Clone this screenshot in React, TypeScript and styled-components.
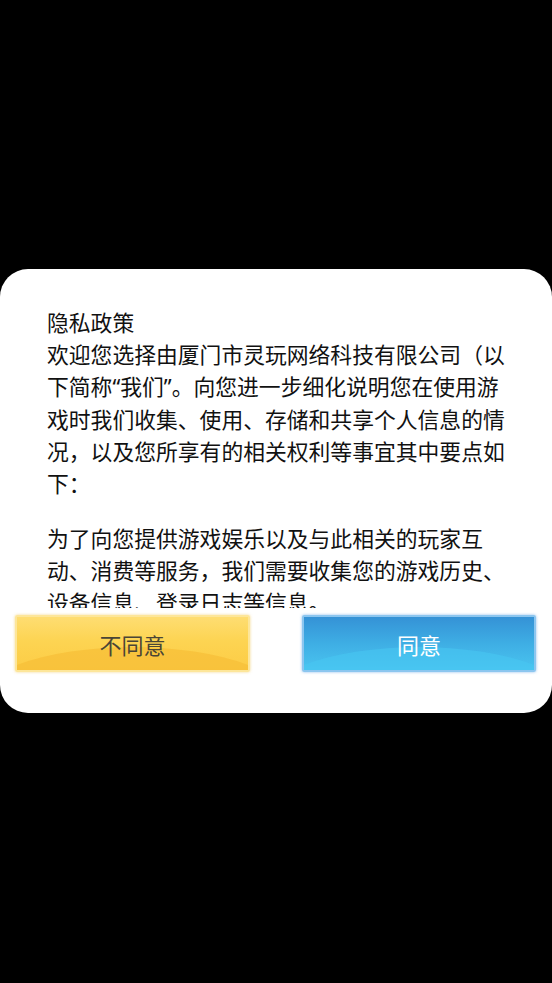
import styled, { createGlobalStyle } from 'styled-components';

const GlobalStyle = createGlobalStyle`
   html, body {
      margin: 0;
      padding: 0;
      background: #000;
   }

   body {
      font-family: "Noto Sans CJK SC", "Noto Sans", sans-serif;
   }
`

const Screen = styled.div`
   width: 552px;
   height: 983px;
   padding-top: 269px;
   box-sizing: border-box;
   background: #000;
`

const Dialog = styled.div`
   display: flex;
   flex-direction: column;
   height: 444px;
   border-radius: 28px;
   background: #fff;
   overflow: hidden;
`

const Content = styled.div`
   height: 302px;
   margin-top: 37px;
   padding-left: 47px;
   overflow: hidden;
   font-size: 21.8px;
   line-height: 32px;
   color: #111;
`

const Paragraph = styled.p<{ $gap?: number }>`
   margin: ${(p) => p.$gap ?? 0}px 0 0 0;
`

const Line = styled.span`
   display: block;
   white-space: nowrap;
`

// the reference renders curly quotes narrow, not full width
const Quote = styled.span`
   font-family: "Noto Sans", sans-serif;
`

const Actions = styled.div`
   display: flex;
   justify-content: space-between;
   padding: 0 16px 0 15px;
   margin-top: 7px;
`

const Button = styled.button<{ $tone: 'yellow' | 'blue' }>`
   position: relative;
   width: ${(p) => (p.$tone === 'yellow' ? 235 : 234)}px;
   height: 57px;
   padding: 0;
   border: 2px solid ${(p) => (p.$tone === 'yellow' ? '#fde69a' : '#8cc6ef')};
   border-radius: 2px;
   box-shadow: 0 0 3px ${(p) => (p.$tone === 'yellow' ? 'rgba(240, 200, 90, 0.7)' : 'rgba(90, 160, 230, 0.7)')};
   overflow: hidden;
   font-family: "Noto Sans CJK SC", sans-serif;
   font-size: 22px;
   color: ${(p) => (p.$tone === 'yellow' ? '#4a4536' : '#fff')};
   background: ${(p) =>
      p.$tone === 'yellow'
         ? 'linear-gradient(180deg, #fedd72 0%, #fdd452 45%, #fccc45 100%)'
         : 'linear-gradient(180deg, #3592d6 0%, #3eaee4 50%, #4ac4f0 100%)'};

   &::before {
      content: '';
      position: absolute;
      left: -20%;
      right: -20%;
      top: 30px;
      height: 120px;
      border-radius: 50%;
      background: ${(p) => (p.$tone === 'yellow' ? '#f7bf38' : '#48c6f2')};
      opacity: ${(p) => (p.$tone === 'yellow' ? 0.75 : 0.6)};
   }

   span {
      position: relative;
   }
`

const App = () => {
   return (
      <Screen>
         <GlobalStyle />
         <Dialog>
            <Content>
               <Paragraph>
                  <Line>隐私政策</Line>
                  <Line>欢迎您选择由厦门市灵玩网络科技有限公司（以</Line>
                  <Line>下简称<Quote>“</Quote>我们<Quote>”</Quote>。向您进一步细化说明您在使用游</Line>
                  <Line>戏时我们收集、使用、存储和共享个人信息的情</Line>
                  <Line>况，以及您所享有的相关权利等事宜其中要点如</Line>
                  <Line>下：</Line>
               </Paragraph>
               <Paragraph $gap={23}>
                  <Line>为了向您提供游戏娱乐以及与此相关的玩家互</Line>
                  <Line>动、消费等服务，我们需要收集您的游戏历史、</Line>
                  <Line>设备信息、登录日志等信息。</Line>
               </Paragraph>
            </Content>
            <Actions>
               <Button $tone='yellow'>
                  <span>不同意</span>
               </Button>
               <Button $tone='blue'>
                  <span>同意</span>
               </Button>
            </Actions>
         </Dialog>
      </Screen>
   )
}

export default App;
